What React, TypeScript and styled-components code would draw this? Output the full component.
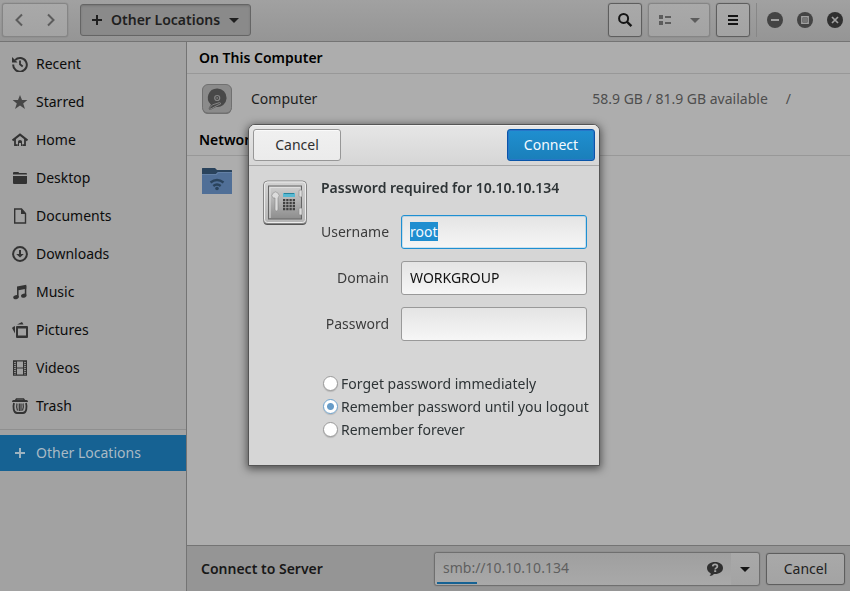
import React, { useEffect, useRef } from "react";
import styled, { createGlobalStyle, css } from "styled-components";

const GlobalStyle = createGlobalStyle`
  *, *::before, *::after { box-sizing: border-box; }
  body { margin: 0; background: #adadad; }
  body, button, input {
    font-family: "Noto Sans", "Open Sans", sans-serif;
    font-size: 14px;
    line-height: 20px;
  }
  button { cursor: default; }
`;

const Window = styled.div`
  display: flex;
  flex-direction: column;
  min-height: 100vh;
  color: #0c0c0c;
`;

const HeaderBar = styled.header`
  display: flex;
  align-items: center;
  gap: 6px;
  height: 42px;
  padding: 0 7px 2px 2px;
  background: linear-gradient(#a1a1a1, #959595);
  border-bottom: 1px solid #747474;
`;

const Spacer = styled.div`
  flex: 1;
`;

const frame = css`
  border: 1px solid #6f6f6f;
  border-radius: 3px;
  background: linear-gradient(#a9a9a9, #a3a3a3);
  box-shadow: 0 0 1px rgba(0, 0, 0, 0.4);
`;

const NavGroup = styled.div`
  ${frame}
  display: flex;
  height: 34px;
  width: 66px;
  padding: 0 2px;
  margin-right: 6px;
  border-color: #858585;
`;

const NavButton = styled.button`
  flex: 1;
  display: grid;
  place-items: center;
  padding: 0;
  border: 0;
  background: none;
  color: #5c5c5c;
`;

const PathButton = styled.button`
  display: flex;
  align-items: center;
  gap: 6px;
  height: 32px;
  padding: 0 8px;
  border: 1px solid #656565;
  border-radius: 3px;
  background: #8a8a8a;
  box-shadow: inset 0 1px 2px rgba(0, 0, 0, 0.15);
  color: #1f1f1f;
  font-weight: 600;
`;

const ToolButton = styled.button<{ $wide?: boolean; $dim?: boolean }>`
  ${frame}
  display: flex;
  align-items: center;
  justify-content: ${(p) => (p.$wide ? "space-between" : "center")};
  width: ${(p) => (p.$wide ? 62 : 34)}px;
  height: 34px;
  padding: ${(p) => (p.$wide ? "0 6px 0 8px" : "0")};
  color: ${(p) => (p.$dim ? "#5c5c5c" : "#151515")};
  border-color: ${(p) => (p.$dim ? "#858585" : "#5e5e5e")};
`;

const WindowControls = styled.div`
  display: flex;
  align-items: center;
  gap: 14px;
  height: 34px;
  padding-left: 10px;
  border-left: 1px solid #878787;
`;

const RoundButton = styled.button<{ $dark?: boolean }>`
  display: grid;
  place-items: center;
  width: 16px;
  height: 16px;
  padding: 0;
  border: 0;
  border-radius: 50%;
  background: ${(p) => (p.$dark ? "#303030" : "#444")};
  color: #a0a0a0;
`;

const Body = styled.div`
  display: flex;
  flex: 1;
`;

const Sidebar = styled.nav`
  width: 187px;
  flex: none;
  padding-top: 3px;
  background: #a2a2a2;
  border-right: 1px solid #747474;
`;

const Place = styled.a<{ $active?: boolean }>`
  display: flex;
  align-items: center;
  gap: 8px;
  height: ${(p) => (p.$active ? 36 : 38)}px;
  padding-left: 12px;
  color: ${(p) => (p.$active ? "#a9bac5" : "#0c0c0c")};
  background: ${(p) => (p.$active ? "#166293" : "none")};
  text-decoration: none;
  svg { color: ${(p) => (p.$active ? "#9db3c0" : "#333")}; }
`;

const Divider = styled.hr`
  margin: 4px 0 5px;
  border: 0;
  border-top: 1px solid #8f8f8f;
`;

const Main = styled.main`
  display: flex;
  flex-direction: column;
  flex: 1;
  min-width: 0;
  background: #adadad;
`;

const Locations = styled.div`
  flex: 1;
`;

const GroupTitle = styled.h2`
  margin: 0;
  height: 32px;
  padding: 6px 12px;
  font-size: 14px;
  line-height: 20px;
  font-weight: 600;
  color: #000;
  border-bottom: 1px solid #989898;
`;

const LocationRow = styled.div`
  display: flex;
  align-items: center;
  height: 50px;
  padding: 0 59px 0 14px;
  color: #1d1d1d;
`;

const LocationName = styled.span`
  flex: 1;
  margin-left: 18px;
`;

const Detail = styled.span`
  margin-left: 18px;
  color: #4e4e4e;
`;

const ServerBar = styled.footer`
  display: flex;
  align-items: center;
  gap: 6px;
  height: 46px;
  padding: 0 5px 0 14px;
  background: #959595;
  border-top: 1px solid #747474;
`;

const ServerLabel = styled.label`
  flex: 1;
  font-weight: 600;
  color: #181818;
`;

const AddressBox = styled.div`
  ${frame}
  display: flex;
  align-items: center;
  width: 326px;
  height: 34px;
`;

const AddressField = styled.div`
  display: flex;
  align-items: center;
  flex: 1;
  height: 32px;
  padding: 0 8px 0 2px;
  background: linear-gradient(#9f9f9f, #a9a9a9);
  border-radius: 3px 0 0 3px;
`;

const AddressEntry = styled.div`
  flex: 1;
  display: flex;
  flex-direction: column;
`;

const AddressInput = styled.input`
  width: 100%;
  height: 28px;
  padding: 0 6px;
  border: 0;
  outline: 0;
  background: none;
  color: #5f5f5f;
`;

const Progress = styled.div`
  width: 40px;
  height: 2px;
  background: #166293;
`;

const PlainIconButton = styled.button`
  display: grid;
  place-items: center;
  height: 32px;
  padding: 0;
  border: 0;
  background: none;
  color: #303030;
`;

const ArrowButton = styled(PlainIconButton)`
  width: 28px;
  color: #151515;
`;

const BarButton = styled.button`
  ${frame}
  width: 79px;
  height: 32px;
  padding: 0;
  border-color: #5e5e5e;
  color: #222;
`;

const Scrim = styled.div`
  position: fixed;
  inset: 0;
  display: grid;
  place-items: center;
  padding: 0 2px 2px 0;
`;

const Dialog = styled.form`
  width: 352px;
  border: 1px solid #555;
  border-radius: 7px 7px 0 0;
  background: #d6d6d6;
  box-shadow: 0 2px 8px 1px rgba(0, 0, 0, 0.55);
  color: #2e3436;
  overflow: hidden;
`;

const DialogHeader = styled.div`
  display: flex;
  justify-content: space-between;
  padding: 4px 4px;
  height: 41px;
  background: linear-gradient(#e6e6e6, #d6d6d6);
  border-bottom: 1px solid #a8a8a8;
  box-shadow: inset 0 1px #f3f3f3;
`;

const DialogButton = styled.button<{ $primary?: boolean }>`
  width: 88px;
  height: 32px;
  padding: 0;
  border: 1px solid ${(p) => (p.$primary ? "#0955a8" : "#979797")};
  border-radius: 3px;
  background: ${(p) =>
    p.$primary ? "linear-gradient(#1f8fd0, #1a7fba)" : "linear-gradient(#f0f0f0, #ebebeb)"};
  box-shadow: ${(p) => (p.$primary ? "inset 0 0 0 1px #2876c8" : "inset 0 1px #fafafa")};
  color: ${(p) => (p.$primary ? "#f4faff" : "#303030")};
`;

const DialogBody = styled.div`
  display: flex;
  gap: 12px;
  padding: 12px 12px 23px 12px;
  align-items: flex-start;
  > svg { flex: none; }
`;

const Form = styled.div`
  flex: 1;
  min-width: 0;
`;

const DialogTitle = styled.h1`
  margin: 0 0 17px;
  font-size: 14px;
  line-height: 20px;
  font-weight: 600;
`;

const Fields = styled.div`
  display: grid;
  grid-template-columns: 68px 1fr;
  column-gap: 12px;
  row-gap: 12px;
  align-items: center;
`;

const FieldLabel = styled.label`
  text-align: right;
  color: #3c3c3c;
`;

const Field = styled.input`
  width: 100%;
  height: 34px;
  padding: 0 8px;
  border: 1px solid #999;
  border-radius: 3px;
  outline: 0;
  background: linear-gradient(#e4e4e4, #f6f6f6);
  color: #111;
  &:focus { border-color: #1e8fd2; box-shadow: inset 0 0 0 1px rgba(30, 143, 210, 0.2); }
  &::selection { background: #1f8ed0; color: #f4faff; }
`;

const Choices = styled.div`
  display: flex;
  flex-direction: column;
  margin: 32px 0 0 2px;
`;

const Choice = styled.label`
  display: flex;
  align-items: center;
  gap: 3px;
  height: 23px;
  white-space: nowrap;
`;

const Radio = styled.input`
  appearance: none;
  flex: none;
  width: 15px;
  height: 15px;
  margin: 0 0 2px;
  border: 1px solid #999;
  border-radius: 50%;
  background: #fff;
  box-shadow: 0 1px 1px rgba(0, 0, 0, 0.15);
  &:checked {
    border-color: #6fa3cd;
    background: radial-gradient(circle, #679cc8 0 3px, #fff 4px);
  }
`;

const glyphs = {
  recent: (
    <>
      <path d="M3.1 4.1A6.8 6.8 0 1 1 1.2 8.5" fill="none" stroke="currentColor" strokeWidth="2" />
      <path d="M0 1v5.5h5.5L3.8 4.8z" />
      <path d="M8 4.5V8.3L10.7 10.5" fill="none" stroke="currentColor" strokeWidth="1.8" />
    </>
  ),
  star: <path fill="#474747" d="M8 1l2 5h5.4l-4.2 3.5L13 15l-5-3.4L3 15l1.8-5.5L.6 6H6z" />,
  home: (
    <>
      <path d="M.5 8.5L8 2.6l7.5 5.9" fill="none" stroke="currentColor" strokeWidth="2" />
      <path d="M3 7v6.2h2.7M13 7v6.2h-2.7" fill="none" stroke="currentColor" strokeWidth="1.8" />
      <path d="M6 9.5q0-1.5 2-1.5t2 1.5V14H9v-3H7v3H6z" />
    </>
  ),
  folder: <path d="M1 3q0-1 1-1h4q1 0 1 1h7q1 0 1 1v.5H1zM1 6h14v7q0 1-1 1H2q-1 0-1-1z" />,
  document: (
    <>
      <path d="M2.7 1h6.8l4 4.4V15H2.7z" fill="none" stroke="currentColor" strokeWidth="1.4" />
      <path d="M9 1l5 5H9z" />
    </>
  ),
  download: (
    <>
      <circle cx="8" cy="8" r="6.9" fill="none" stroke="currentColor" strokeWidth="2" />
      <path d="M7 4h2v4h2.8L8 11.5 4.2 8H7z" />
    </>
  ),
  music: (
    <>
      <path d="M5 2.4L14.3.8v4L6.6 6.2v7H5z" />
      <path d="M12.8 2h1.5v9.3h-1.5z" />
      <ellipse cx="4" cy="13.2" rx="2.8" ry="2" transform="rotate(-12 4 13.2)" />
      <ellipse cx="11.8" cy="11.7" rx="2.8" ry="2" transform="rotate(-12 11.8 11.7)" />
    </>
  ),
  pictures: (
    <>
      <path fillRule="evenodd" d="M5 4h10q1 0 1 1v10q0 1-1 1H5q-1 0-1-1V5q0-1 1-1zm1 2.5v7h8v-7z" />
      <path d="M3 4v7.5L0 6l1-1zM5 2.4L10 0l1.5 2.6z" />
    </>
  ),
  video: (
    <>
      <path d="M1.6.8h12.8v14.4H1.6zM4.4 1v14M11.6 1v14M4.4 8h7.2" fill="none" stroke="currentColor" strokeWidth="1.2" />
      <path d="M2.9 1v14M13.1 1v14" stroke="currentColor" strokeWidth="1.6" strokeDasharray="1 1" />
    </>
  ),
  trash: (
    <>
      <path fill="none" stroke="currentColor" strokeWidth="1.5" d="M3.5 2.5L4.500 .9h7l1 1.600" />
      <path d="M1.500 2h13q1.500 0 1.500 2H0q0-2 1.500-2z" />
      <path fill="none" stroke="currentColor" strokeWidth="1.8" d="M2 5c-1.200 4-.5 10 3 10h6c3.500 0 4.200-6 3-10" />
      <path fill="none" stroke="currentColor" strokeWidth="1.2" d="M5 5.500q-1 4 .5 7M11 5.500q1 4-.5 7M7.300 5.500v7.500M9 5.500v7.500" />
    </>
  ),
  plus: <path d="M7 3h2v4h4v2H9v4H7V9H3V7h4z" />,
  back: <path d="M10 2.5L4.5 8l5.5 5.5" fill="none" stroke="currentColor" strokeWidth="2" />,
  forward: <path d="M6 2.5L11.5 8 6 13.5" fill="none" stroke="currentColor" strokeWidth="2" />,
  down: <path d="M3 6h10l-5 5z" />,
  search: (
    <>
      <circle cx="6.6" cy="6.4" r="4.5" fill="none" stroke="currentColor" strokeWidth="2" />
      <path d="M9.7 9.5l4.7 4.7" stroke="currentColor" strokeWidth="2.4" />
    </>
  ),
  list: <path d="M2 3h4v4H2zM8 4h6v2H8zM2 9h4v4H2zM8 10h6v2H8z" />,
  menu: <path d="M3 3h10v2H3zM3 7h10v2H3zM3 11h10v2H3z" />,
  minimize: <path d="M4 7h8v2H4z" />,
  maximize: (
    <>
      <path d="M4.8 4.8h6.4v6.4H4.8z" fill="none" stroke="currentColor" strokeWidth="1.4" />
      <path fill="#777" d="M6 6h4v4H6z" />
    </>
  ),
  close: <path d="M5 5l6 6M11 5l-6 6" stroke="currentColor" strokeWidth="1.7" />,
  help: (
    <>
      <path d="M8 1c4.6 0 8 2.5 8 6s-3.4 6-8 6l-1 0q-1.500 2-4.500 2 1.500-1 1.200-2.800C1.200 11 0 9.200 0 7c0-3.500 3.400-6 8-6z" />
      <path d="M5.700 5.300q.2-2 2.400-2 2.300 0 2.300 1.900 0 1.100-1.200 1.800-1 .5-1 1.400M7.200 10.200h2" fill="none" stroke="#a6a6a6" strokeWidth="1.700" />
    </>
  ),
};

type GlyphName = keyof typeof glyphs;

function Icon({ name }: { name: GlyphName }) {
  return (
    <svg width="16" height="16" viewBox="0 0 16 16" fill="currentColor" aria-hidden="true">
      {glyphs[name]}
    </svg>
  );
}

function DiskIcon() {
  return (
    <svg width="32" height="32" viewBox="0 0 32 32" aria-hidden="true">
      <rect x="1.500" y="2" width="29" height="29" rx="5.500" fill="#707070" />
      <rect x="1.500" y="1.500" width="29" height="28.500" rx="5.500" fill="#8b8b8b" stroke="#707070" />
      <path d="M16 5.500a9.300 9.300 0 1 1-1 18.500l-5 2.500q-3 .5-2-2l2-2.700A9.300 9.300 0 0 1 16 5.500z" fill="#484848" />
      <path d="M8.500 25l3-3.200 7-2.200 1.500 1-5 2.500-5.500 3z" fill="#484848" stroke="#858585" />
      <circle cx="16.200" cy="15" r="2.500" fill="#454545" stroke="#858585" strokeWidth="1.200" />
      <circle cx="16.200" cy="15" r="1" fill="#777" />
    </svg>
  );
}

function NetworkFolderIcon() {
  return (
    <svg width="32" height="32" viewBox="0 0 32 32" aria-hidden="true">
      <path d="M1 3.500q0-.5.500-.5h12.500l2 2h14.500q.5 0 .5.500V12H1z" fill="#2a435c" />
      <path d="M1 9h14l2-2h14v22H1z" fill="#506f97" />
      <path d="M1 9h14l2-2h14v1H17.500l-2 2H1z" fill="#6380a5" />
      <g fill="none" stroke="#2a435c" strokeWidth="2.400">
        <path d="M9.500 17.500q6.500-5 13 0M12.300 21q3.700-3 7.400 0" />
      </g>
      <circle cx="16" cy="23.500" r="1.800" fill="#2a435c" />
    </svg>
  );
}

function SafeIcon() {
  return (
    <svg width="48" height="48" viewBox="0 0 48 48" aria-hidden="true">
      <defs>
        <linearGradient id="safeDoor" x2="0" y2="1">
          <stop stopColor="#d0d0d0" />
          <stop offset="1" stopColor="#8d8d8d" />
        </linearGradient>
        <linearGradient id="safeFrame" x2="0" y2="1">
          <stop stopColor="#d2d2d2" />
          <stop offset="1" stopColor="#b5b5b5" />
        </linearGradient>
      </defs>
      <rect x="2.500" y="4" width="43" height="43" rx="4" fill="#555" />
      <rect x="2.500" y="3" width="43" height="42.500" rx="4" fill="url(#safeFrame)" stroke="#858585" />
      <rect x="3.500" y="4" width="41" height="40.500" rx="3" fill="none" stroke="#ececec" />
      <rect x="7.500" y="8" width="33" height="33" fill="url(#safeDoor)" stroke="#666" />
      <path d="M9 40V9.500h30" fill="none" stroke="#e0e0e0" />
      <g fill="#dcdcdc" stroke="#888" strokeWidth=".6">
        <rect x="38" y="12" width="3" height="7" rx="1" />
        <rect x="38" y="30" width="3" height="7" rx="1" />
        <path d="M12 20a3.500 3.500 0 1 1 5 0V32q-1.500 2-3 0V20z" />
      </g>
      <rect x="22" y="15" width="12" height="4" fill="#57b9d2" />
      <path d="M23 15h10v1H23z" fill="#28829a" />
      <path d="M22 22.200h12M22 25.200h12M22 28.200h12M22 31.200h12" stroke="#404040" strokeWidth="2.300" strokeDasharray="2.300 .933" />
    </svg>
  );
}

const places: { icon: GlyphName; label: string }[] = [
  { icon: "recent", label: "Recent" },
  { icon: "star", label: "Starred" },
  { icon: "home", label: "Home" },
  { icon: "folder", label: "Desktop" },
  { icon: "document", label: "Documents" },
  { icon: "download", label: "Downloads" },
  { icon: "music", label: "Music" },
  { icon: "pictures", label: "Pictures" },
  { icon: "video", label: "Videos" },
  { icon: "trash", label: "Trash" },
];

const choices = ["Forget password immediately", "Remember password until you logout", "Remember forever"];

function PasswordDialog() {
  const username = useRef<HTMLInputElement>(null);
  useEffect(() => {
    username.current?.focus();
    username.current?.select();
  }, []);
  return (
    <Scrim>
      <Dialog role="dialog" aria-labelledby="dialog-title" onSubmit={(e) => e.preventDefault()}>
        <DialogHeader>
          <DialogButton type="button">Cancel</DialogButton>
          <DialogButton type="submit" $primary>Connect</DialogButton>
        </DialogHeader>
        <DialogBody>
          <SafeIcon />
          <Form>
            <DialogTitle id="dialog-title">Password required for 10.10.10.134</DialogTitle>
            <Fields>
              <FieldLabel htmlFor="username">Username</FieldLabel>
              <Field id="username" ref={username} defaultValue="root" autoComplete="off" />
              <FieldLabel htmlFor="domain">Domain</FieldLabel>
              <Field id="domain" defaultValue="WORKGROUP" spellCheck={false} />
              <FieldLabel htmlFor="password">Password</FieldLabel>
              <Field id="password" type="password" />
            </Fields>
            <Choices role="radiogroup">
              {choices.map((text, i) => (
                <Choice key={text}>
                  <Radio type="radio" name="remember" defaultChecked={i === 1} />
                  {text}
                </Choice>
              ))}
            </Choices>
          </Form>
        </DialogBody>
      </Dialog>
    </Scrim>
  );
}

export default function App() {
  return (
    <>
      <GlobalStyle />
      <Window>
        <HeaderBar>
          <NavGroup>
            <NavButton aria-label="Back"><Icon name="back" /></NavButton>
            <NavButton aria-label="Forward"><Icon name="forward" /></NavButton>
          </NavGroup>
          <PathButton><Icon name="plus" />Other Locations<Icon name="down" /></PathButton>
          <Spacer />
          <ToolButton aria-label="Search"><Icon name="search" /></ToolButton>
          <ToolButton aria-label="View options" $wide $dim><Icon name="list" /><Icon name="down" /></ToolButton>
          <ToolButton aria-label="Menu"><Icon name="menu" /></ToolButton>
          <WindowControls>
            <RoundButton aria-label="Minimize"><Icon name="minimize" /></RoundButton>
            <RoundButton aria-label="Maximize"><Icon name="maximize" /></RoundButton>
            <RoundButton aria-label="Close" $dark><Icon name="close" /></RoundButton>
          </WindowControls>
        </HeaderBar>
        <Body>
          <Sidebar>
            {places.map((p) => (
              <Place key={p.label} href="#"><Icon name={p.icon} />{p.label}</Place>
            ))}
            <Divider />
            <Place href="#" $active><Icon name="plus" />Other Locations</Place>
          </Sidebar>
          <Main>
            <Locations>
              <GroupTitle>On This Computer</GroupTitle>
              <LocationRow>
                <DiskIcon />
                <LocationName>Computer</LocationName>
                <Detail>58.9 GB / 81.9 GB available</Detail>
                <Detail>/</Detail>
              </LocationRow>
              <GroupTitle>Networks</GroupTitle>
              <LocationRow>
                <NetworkFolderIcon />
              </LocationRow>
            </Locations>
            <ServerBar>
              <ServerLabel htmlFor="address">Connect to Server</ServerLabel>
              <AddressBox>
                <AddressField>
                  <AddressEntry>
                    <AddressInput id="address" defaultValue="smb://10.10.10.134" />
                    <Progress />
                  </AddressEntry>
                  <PlainIconButton aria-label="Help"><Icon name="help" /></PlainIconButton>
                </AddressField>
                <ArrowButton aria-label="Recent servers"><Icon name="down" /></ArrowButton>
              </AddressBox>
              <BarButton>Cancel</BarButton>
            </ServerBar>
          </Main>
        </Body>
      </Window>
      <PasswordDialog />
    </>
  );
}
